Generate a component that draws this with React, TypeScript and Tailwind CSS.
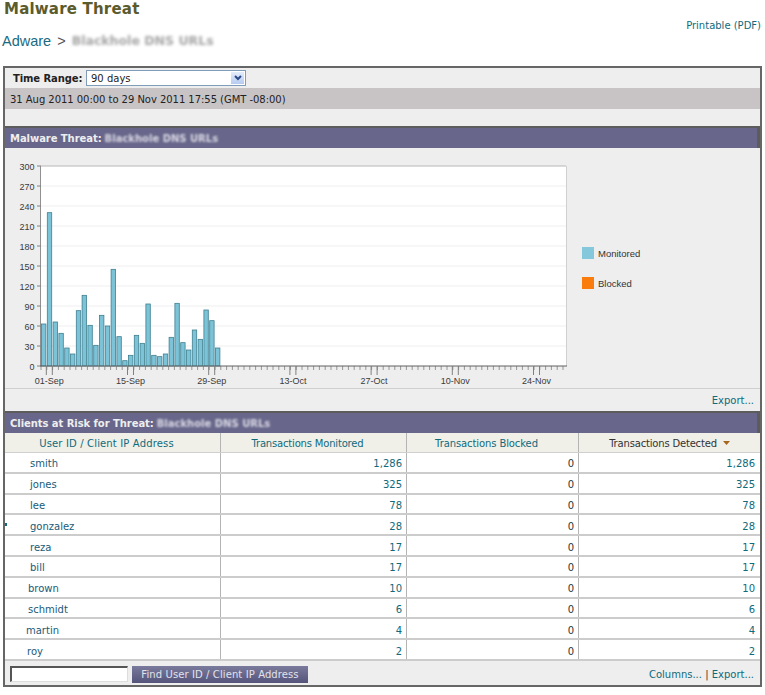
const bars = [63, 230, 66, 49, 27, 18, 83, 106, 61, 31, 76, 60, 145, 44, 8, 16, 46, 34, 93, 16, 14, 18, 43, 94, 35, 24, 54, 40, 84, 68, 27];
const yTicks = [0, 30, 60, 90, 120, 150, 180, 210, 240, 270, 300];
const xLabels = ["01-Sep", "15-Sep", "29-Sep", "13-Oct", "27-Oct", "10-Nov", "24-Nov"];

const rows = [
  { user: "smith", pad: "pl-[25px]", mon: "1,286", det: "1,286" },
  { user: "jones", pad: "pl-[25px]", mon: "325", det: "325" },
  { user: "lee", pad: "pl-[25px]", mon: "78", det: "78" },
  { user: "gonzalez", pad: "pl-[25px]", mon: "28", det: "28", dot: true },
  { user: "reza", pad: "pl-[25px]", mon: "17", det: "17" },
  { user: "bill", pad: "pl-[25px]", mon: "17", det: "17" },
  { user: "brown", pad: "pl-[23px]", mon: "10", det: "10" },
  { user: "schmidt", pad: "pl-[23px]", mon: "6", det: "6" },
  { user: "martin", pad: "pl-[21px]", mon: "4", det: "4" },
  { user: "roy", pad: "pl-[22px]", mon: "2", det: "2" },
];

const LEFT = 41;
const BASE = 366;
const STEP = 5.8;

function Chart() {
  return (
    <svg width="565" height="240" viewBox="5 148 565 240" className="block shrink-0">
      <rect x={LEFT} y={166} width={525} height={200} fill="#ffffff" />
      {yTicks.slice(1).map((t) => (
        <line key={t} x1={LEFT} x2={566} y1={BASE - (t * 2) / 3} y2={BASE - (t * 2) / 3} stroke={t === 300 ? "#b8b8b8" : "#efefef"} />
      ))}
      <line x1={566.5} x2={566.5} y1={166} y2={366} stroke="#d0d0d0" />
      <line x1={40.5} x2={40.5} y1={166} y2={366} stroke="#909090" />
      {yTicks.map((t) => (
        <g key={t}>
          <line x1={37} x2={41} y1={BASE - (t * 2) / 3} y2={BASE - (t * 2) / 3} stroke="#808080" />
          <text x={34.5} y={BASE - (t * 2) / 3 + 3.5} textAnchor="end" fontSize="9" fill="#3a3a3a" fontFamily="'Liberation Sans', sans-serif">
            {t}
          </text>
        </g>
      ))}
      {bars.map((v, i) => (
        <rect key={i} x={LEFT + i * STEP + 0.5} y={BASE - (v * 2) / 3} width={4.4} height={(v * 2) / 3} fill="#7cc3d8" stroke="#3f7f90" strokeWidth="0.8" />
      ))}
      {Array.from({ length: 91 }, (_, i) => (
        <line key={i} x1={LEFT + i * STEP} x2={LEFT + i * STEP} y1={366} y2={370} stroke="#808080" strokeWidth="0.8" />
      ))}
      <line x1={LEFT - 1} x2={567} y1={366} y2={366} stroke="#606060" />
      {xLabels.map((label, i) => {
        const x = 49.3 + i * 81.2;
        return (
          <g key={label}>
            <line x1={x - 3} x2={x - 3} y1={366} y2={375} stroke="#808080" />
            <line x1={x + 3} x2={x + 3} y1={366} y2={375} stroke="#808080" />
            <text x={x} y={384} textAnchor="middle" fontSize="9" fill="#3a3a3a" fontFamily="'Liberation Sans', sans-serif">
              {label}
            </text>
          </g>
        );
      })}
    </svg>
  );
}

function Blurred({ className }: { className: string }) {
  return <span className={className}>Blackhole DNS URLs</span>;
}

function SectionBar({ title }: { title: string }) {
  return (
    <div className="flex h-[22px] items-center gap-[3px] border-t-2 border-r-[3px] border-[#5c5c5c] bg-[#68668a] pl-[5px] text-[10px] font-bold text-[#eeeeee]">
      <span className="tracking-[-0.06px]">{title}</span>
      <Blurred className="text-[#d8d8e4] blur-[1.2px]" />
    </div>
  );
}

const headCell = "flex items-center justify-center border-r border-[#b4b4b4] pt-px pr-3 text-[10px] text-[#0f6a7c]";
const cols = "grid grid-cols-[216px_186px_172px_1fr]";

export default function App() {
  return (
    <div className="h-[695px] w-[765px] overflow-hidden bg-white font-['DejaVu_Sans',sans-serif] text-[#333333]">
      <div className="relative h-[66px]">
        <h1 className="pt-px pl-1 text-[15px] leading-[17px] font-bold tracking-[0.2px] text-[#5b5b2e]">Malware Threat</h1>
        <div className="mt-[14px] flex items-center pl-[2px] font-['Liberation_Sans',sans-serif] text-[14.5px] leading-[18px]">
          <span className="text-[#1a6a80]">Adware</span>
          <span className="ml-[6px] text-[#555555]">&gt;</span>
          <Blurred className="ml-[6px] font-['DejaVu_Sans',sans-serif] text-[12.5px] font-bold text-[#a4a4a4] blur-[1.5px]" />
        </div>
        <a className="absolute top-5 right-[4px] text-[10px] leading-[12px] text-[#0f6a7c]">Printable (PDF)</a>
      </div>

      <div className="ml-[3px] w-[759px] border-2 border-[#666666] bg-[#eeeeee]">
        <div className="flex h-5 items-center pl-2 text-[10px]">
          <span className="w-[73px] font-bold tracking-[-0.1px] text-[#222222]">Time Range:</span>
          <div className="flex h-4 w-[160px] items-center justify-between border border-[#7f9db9] bg-white pl-1 text-[#222222]">
            <span>90 days</span>
            <div className="flex h-full w-[15px] items-center justify-center border border-white bg-gradient-to-b from-[#e4edfb] to-[#b6cbf0]">
              <svg width="8" height="6" viewBox="0 0 8 6">
                <path d="M1 1l3 3 3-3" fill="none" stroke="#2a4a8a" strokeWidth="2" />
              </svg>
            </div>
          </div>
        </div>
        <div className="flex h-[21px] items-center bg-[#c8c4c6] pt-px pl-[5px] text-[10px] tracking-[-0.04px] text-[#222222]">
          31 Aug 2011 00:00 to 29 Nov 2011 17:55 (GMT -08:00)
        </div>
        <div className="h-[17px]" />

        <SectionBar title="Malware Threat:" />
        <div className="flex h-[241px] border-b border-[#cfcfcf]">
          <Chart />
          <div className="flex flex-col gap-[18px] pt-[99px] pl-[12px] font-['Liberation_Sans',sans-serif] text-[9.5px] text-[#333333]">
            <div className="flex h-3 items-center gap-[4px]">
              <span className="h-3 w-3 bg-[#85c8dc]" />
              <span className="pt-[2px]">Monitored</span>
            </div>
            <div className="flex h-3 items-center gap-[4px]">
              <span className="h-3 w-3 bg-[#f97c0c]" />
              <span className="pt-[2px]">Blocked</span>
            </div>
          </div>
        </div>
        <div className="flex h-[22px] items-center justify-end pr-[6px] text-[10px] text-[#0f6a7c]">Export...</div>

        <SectionBar title="Clients at Risk for Threat:" />
        <div className={`${cols} h-5 border-b border-[#cfcfcf] bg-[#f0f0e8]`}>
          <div className={`${headCell} tracking-[0.15px]`}>User ID / Client IP Address</div>
          <div className={`${headCell} tracking-[-0.18px]`}>Transactions Monitored</div>
          <div className={`${headCell} tracking-[-0.1px]`}>Transactions Blocked</div>
          <div className="flex items-center justify-center gap-[6px] pt-px text-[10px] tracking-[-0.18px] text-[#333333]">
            Transactions Detected
            <svg width="7" height="4" viewBox="0 0 7 4">
              <path d="M0 0h7L3.5 4z" fill="#a8651d" />
            </svg>
          </div>
        </div>
        <div className="bg-white text-[10px]">
          {rows.map((r) => (
            <div key={r.user} className={`${cols} relative h-[20.8px] border-b-2 border-[#cccccc]`}>
              {r.dot && <span className="absolute top-[8px] left-[0px] h-[3px] w-[2px] bg-[#0f6a7c]" />}
              <div className={`flex items-center border-r border-[#b4b4b4] pt-[3px] text-[#1a5a78] ${r.pad}`}>{r.user}</div>
              <div className="flex items-center justify-end border-r border-[#b4b4b4] pt-[3px] pr-1 text-[#0f6a7c]">{r.mon}</div>
              <div className="flex items-center justify-end border-r border-[#b4b4b4] pt-[3px] pr-1 text-[#333333]">0</div>
              <div className="flex items-center justify-end pt-[3px] pr-[5px] text-[#0f6a7c]">{r.det}</div>
            </div>
          ))}
        </div>
        <div className="flex h-6 items-center pt-[3px] pl-[5px] text-[10px]">
          <div className="h-4 w-[118px] border border-t-2 border-l-2 border-t-[#555555] border-r-[#dddddd] border-b-[#dddddd] border-l-[#555555] bg-white" />
          <button className="ml-1 h-[17px] w-[176px] bg-gradient-to-b from-[#7a7a9c] to-[#55557c] text-[10px] tracking-[0.1px] text-[#e2e2ea]">
            Find User ID / Client IP Address
          </button>
          <div className="mr-[6px] ml-auto text-[#0f6a7c]">
            Columns... <span className="text-[#333333]">|</span> Export...
          </div>
        </div>
      </div>
    </div>
  );
}
